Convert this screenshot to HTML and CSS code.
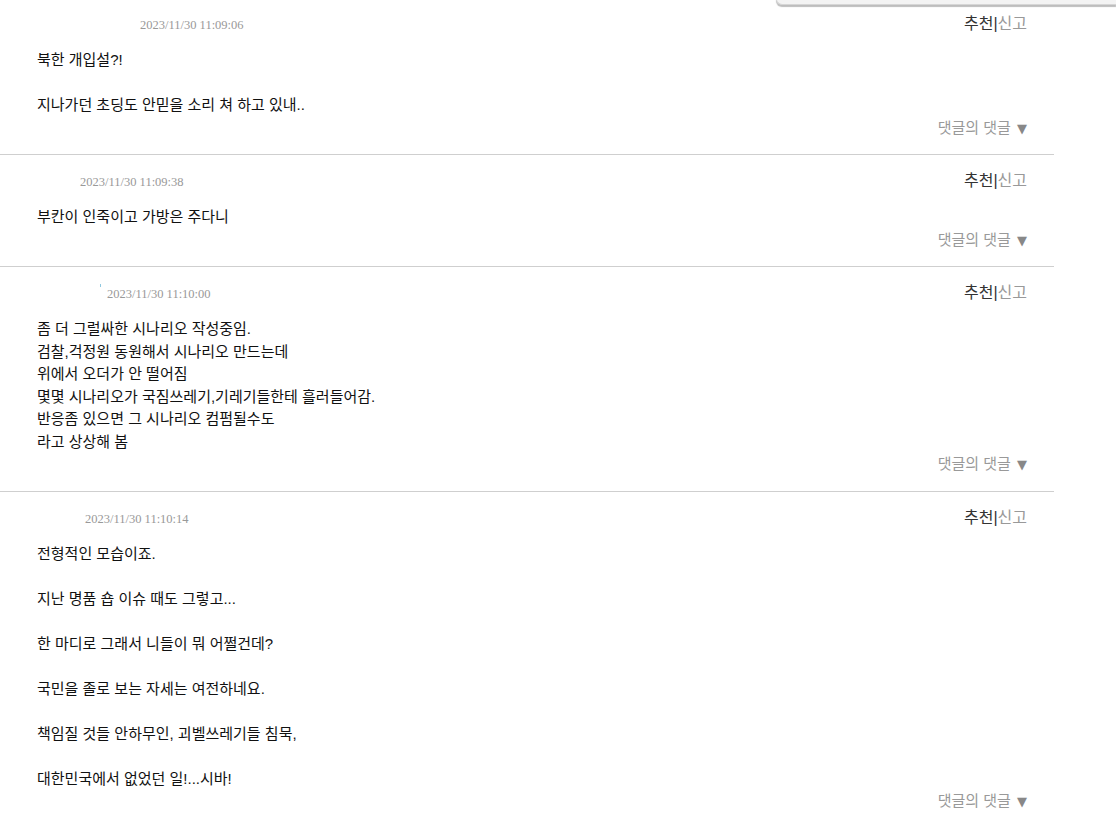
FILE: index.html
```html
<!DOCTYPE html>
<html lang="ko">
<head>
  <meta charset="UTF-8">
  <title>댓글</title>
  <link rel="stylesheet" href="styles.css">
</head>
<body>
  <div class="popup"></div>

  <div class="comments">
    <div class="comment first">
      <div class="head">
        <span class="nick nick1"></span>
        <span class="date">2023/11/30 11:09:06</span>
        <span class="actions"><a class="good">추천</a>|<a class="report">신고</a></span>
      </div>
      <div class="text">북한 개입설?!<br><br>지나가던 초딩도 안믿을 소리 쳐 하고 있내..</div>
      <div class="reply">댓글의 댓글 <span class="arrow">▼</span></div>
    </div>

    <div class="comment">
      <div class="head">
        <span class="nick nick2"></span>
        <span class="date">2023/11/30 11:09:38</span>
        <span class="actions"><a class="good">추천</a>|<a class="report">신고</a></span>
      </div>
      <div class="text">부칸이 인죽이고 가방은 주다니</div>
      <div class="reply">댓글의 댓글 <span class="arrow">▼</span></div>
    </div>

    <div class="comment">
      <div class="head">
        <span class="nick nick3"><i class="broken"></i></span>
        <span class="date">2023/11/30 11:10:00</span>
        <span class="actions"><a class="good">추천</a>|<a class="report">신고</a></span>
      </div>
      <div class="text">좀 더 그럴싸한 시나리오 작성중임.<br>검찰,걱정원 동원해서 시나리오 만드는데<br>위에서 오더가 안 떨어짐<br>몇몇 시나리오가 국짐쓰레기,기레기들한테 흘러들어감.<br>반응좀 있으면 그 시나리오 컴펌될수도<br>라고 상상해 봄</div>
      <div class="reply">댓글의 댓글 <span class="arrow">▼</span></div>
    </div>

    <div class="comment">
      <div class="head">
        <span class="nick nick4"></span>
        <span class="date">2023/11/30 11:10:14</span>
        <span class="actions"><a class="good">추천</a>|<a class="report">신고</a></span>
      </div>
      <div class="text">전형적인 모습이죠.<br><br>지난 명품 숍 이슈 때도 그렇고...<br><br>한 마디로 그래서 니들이 뭐 어쩔건데?<br><br>국민을 졸로 보는 자세는 여전하네요.<br><br>책임질 것들 안하무인, 괴벨쓰레기들 침묵,<br><br>대한민국에서 없었던 일!...시바!</div>
      <div class="reply">댓글의 댓글 <span class="arrow">▼</span></div>
    </div>
  </div>
</body>
</html>
```

FILE: styles.css
```css
body {
  margin: 0;
  background: #fff;
  font-family: "Liberation Sans", "Noto Sans CJK KR", sans-serif;
  color: #111;
  overflow: hidden;
}
.popup {
  position: absolute;
  top: -20px;
  left: 776px;
  width: 339px;
  height: 23px;
  background: #f3f3f3;
  border: 1px solid #d6d6d6;
  border-right: none;
  border-radius: 0 0 0 6px;
  box-shadow: 0 2px 1px #bdbdbd;
}
.comments {
  width: 1054px;
  margin-top: -2px;
}
.comment {
  padding: 15px 27px 14px 37px;
  border-bottom: 1px solid #cfcfcf;
}
.head {
  display: flex;
  align-items: baseline;
  height: 21px;
  line-height: 21px;
}
.nick {
  display: inline-block;
  height: 10px;
  position: relative;
}
.nick1 { width: 103px; }
.nick2 { width: 43px; }
.nick3 { width: 70px; }
.nick4 { width: 48px; }
.broken {
  position: absolute;
  left: 63px;
  top: -4px;
  width: 1px;
  height: 3px;
  background: #8fc8e0;
}
.date {
  font-family: "Liberation Serif", serif;
  font-size: 12.5px;
  color: #999;
}
.actions {
  margin-left: auto;
  font-size: 16px;
  color: #333;
}
.good {
  color: #333;
}
.report {
  color: #999;
}
.text {
  margin-top: 15px;
  font-size: 15px;
  line-height: 22.5px;
}
.reply {
  text-align: right;
  font-size: 15px;
  line-height: 22.5px;
  color: #999;
}
.arrow {
  font-family: "DejaVu Sans", sans-serif;
  font-size: 13px;
  color: #888;
  margin-left: 2px;
}
```
